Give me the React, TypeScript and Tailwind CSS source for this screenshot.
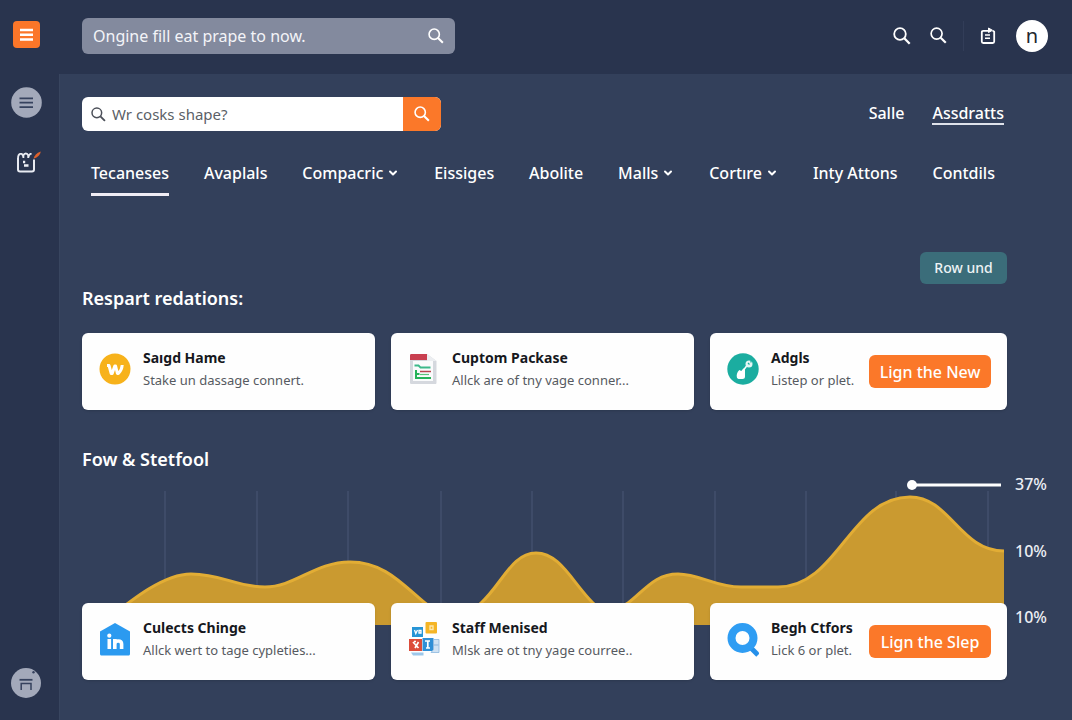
import type { ReactNode } from "react";
import { ChevronDown } from "lucide-react";

const navItems = [
  { label: "Tecaneses", active: true },
  { label: "Avaplals" },
  { label: "Compacric", menu: true },
  { label: "Eissiges" },
  { label: "Abolite" },
  { label: "Malls", menu: true },
  { label: "Cortıre", menu: true },
  { label: "Inty Attons" },
  { label: "Contdils" },
];

function SearchIcon({ className }: { className: string }) {
  return (
    <svg viewBox="0 0 18 18" className={className} fill="none" stroke="currentColor" aria-hidden="true">
      <circle cx="7" cy="7" r="5.800" strokeWidth="1.800" />
      <path d="m11.300 11.300 5.400 5.400" strokeWidth="2.300" />
    </svg>
  );
}

function ListLogo() {
  return (
    <svg viewBox="0 0 27 27" className="size-[27px]" aria-hidden="true">
      <rect width="27" height="27" rx="4" fill="#fb7629" />
      <path d="M7 9h13M7 13.700h13M7 18.500h13" stroke="#fff" strokeWidth="2.400" />
    </svg>
  );
}

function MenuBadge() {
  return (
    <svg viewBox="0 0 31 31" className="size-[31px]" aria-hidden="true">
      <circle cx="15.500" cy="15.500" r="15.300" fill="#a3a9ba" />
      <path d="M8.500 11.300h13.500M8.500 15.700h13.500M8.500 20.100h13.500" stroke="#36425e" strokeWidth="1.700" />
    </svg>
  );
}

function BagIcon() {
  return (
    <svg viewBox="0 0 26 24" className="h-6 w-[26px]" fill="none" aria-hidden="true">
      <path
        d="M3 8.500C3 6 3.500 4.300 5 3.800h1.500c1.200.4 1.700 1.800 1.900 3.700M8.400 8V5.500C8.800 4.200 9.600 3.500 10.800 3.500s2 .7 2.400 2V8M13.400 7.500c.2-1.900.8-3.200 2-3.700h1.200"
        stroke="#e8ebf2"
        strokeWidth="1.800"
        strokeLinejoin="round"
      />
      <path d="M3 8v11.500c0 1.300.7 2 2 2h12c1.300 0 2-.7 2-2V9.500" stroke="#e8ebf2" strokeWidth="2" />
      <path d="M8 12h2.200M9 15.500h4.500" stroke="#eef0f6" strokeWidth="2.400" />
      <path d="M18.500 8.800c.8-3 3-5.800 7.300-7.300-.4 3.200-2.800 6-7.300 7.300Z" fill="#e0622b" />
    </svg>
  );
}

function TableBadge() {
  return (
    <svg viewBox="0 0 30 30" className="size-[30px]" fill="none" aria-hidden="true">
      <circle cx="15" cy="15" r="15" fill="#a3a9ba" />
      <path d="M8.500 11.800h13" stroke="#36425e" strokeWidth="1.800" />
      <path d="M10.200 22v-6.500h9.800V22" stroke="#36425e" strokeWidth="1.500" />
      <circle cx="22.500" cy="4.300" r="1.200" fill="#36425e" />
    </svg>
  );
}

function NoteIcon() {
  return (
    <svg viewBox="0 0 16 18" className="h-[18px] w-4" fill="none" aria-hidden="true">
      <path
        d="M8 3.800H3.300c-1 0-1.500.6-1.500 1.500v9.200c0 .9.500 1.500 1.500 1.500h9.400c1 0 1.500-.6 1.500-1.500V4.800l-1.500-1.200"
        stroke="#fff"
        strokeWidth="1.800"
        strokeLinejoin="round"
      />
      <path d="M8.500 1 12.500 3.300 8.500 5.500Z" fill="#fff" stroke="#fff" strokeLinejoin="round" />
      <path d="M5 8h5M5 11.300h5" stroke="#fff" strokeWidth="1.500" />
    </svg>
  );
}

function CoinIcon() {
  return (
    <svg viewBox="0 0 32 32" className="size-8" fill="none" aria-hidden="true">
      <circle cx="16" cy="16" r="15.500" fill="#f7b21b" />
      <path
        d="M8 12.500h2l2.200 8h1l2.600-7.500h.8l1.800 7.500h1c2.300-2.200 3.600-5 3.800-8.500"
        stroke="#fff"
        strokeWidth="3"
        strokeLinejoin="round"
      />
    </svg>
  );
}

function DocumentIcon() {
  return (
    <svg viewBox="0 0 32 32" className="size-8" fill="none" aria-hidden="true">
      <path d="M2 2.500c0-.8.5-1.500 1.500-1.500H19l9.500 7v21.500c0 1-.5 1.500-1.500 1.500H3.500c-1 0-1.500-.5-1.500-1.500Z" fill="#d5d8de" />
      <path d="M5 8h20v20H5z" fill="#fafbfc" />
      <path d="M2 2.500C2 1.500 2.500 1 3.500 1H19v6H2Z" fill="#c93f50" />
      <path d="M19 1v7h9.500Z" fill="#eceef1" />
      <path d="M6.500 12.500h4l2 2h10" stroke="#3cb98a" strokeWidth="1.800" />
      <path d="M8 17v8h15M8.500 21h3" stroke="#27b35a" strokeWidth="2" />
      <path d="M12 18.500h11" stroke="#b8434f" strokeWidth="1.500" />
      <path d="M12 21.500h9" stroke="#5cc47c" strokeWidth="1.200" />
    </svg>
  );
}

function PlantIcon() {
  return (
    <svg viewBox="0 0 32 32" className="size-8" fill="none" aria-hidden="true">
      <circle cx="16" cy="16" r="15.700" fill="#1bada0" />
      <path d="M10 25c-.8-3 0-6 2.300-8l2 1 2-2.500 1.700.8v7.200c0 1.700-.9 2.500-2.500 2.500h-4Z" fill="#fff" />
      <path d="m16.500 17 4-5" stroke="#fff" strokeWidth="1.500" />
      <circle cx="22" cy="11" r="3.500" fill="#e6f6f4" />
      <path d="m21 10 1.500 1.500M24 7.500v2" stroke="#1bada0" strokeWidth="1.200" />
    </svg>
  );
}

function HouseInIcon() {
  return (
    <svg viewBox="0 0 32 34" className="h-[34px] w-8" fill="none" aria-hidden="true">
      <path d="M1 9.500 16 1l15 8.500V32c0 .9-.6 1.500-1.500 1.500h-27C1.600 33.500 1 32.900 1 32Z" fill="#2b9af0" />
      <circle cx="10.300" cy="13.700" r="2.100" fill="#fff" />
      <path d="M10.300 17v10M15.800 27V17M15.800 22c0-2 1.300-3 3.400-3s3.400 1 3.400 3v5" stroke="#fff" strokeWidth="3.600" />
    </svg>
  );
}

function BlocksIcon() {
  return (
    <svg viewBox="0 0 32 36" className="h-9 w-8" fill="none" aria-hidden="true">
      <rect x="4" y="6" width="11" height="10" fill="#2795d6" />
      <rect x="17.500" y="1" width="11.500" height="11.500" rx="1" fill="#f5b526" />
      <path d="M22 5h3v3.500h-3z" stroke="#fde6ac" strokeWidth="1.400" />
      <path d="m6.500 9 1.300 3.500L9.500 9M11 9.500h2v2.500h-2z" stroke="#fff" strokeWidth="1.300" />
      <rect x="1" y="18" width="13" height="12" fill="#dc4c3a" />
      <path d="m5 21 5.500 6M10.500 21 7 27M6 20.500h2" stroke="#fff" strokeWidth="1.700" />
      <rect x="14.500" y="17" width="11" height="13" fill="#2f8fd6" />
      <path d="M17 20h5M19.800 20v6.500M18 27h4" stroke="#fff" strokeWidth="1.700" />
      <path d="M25.500 18.500h5.500v13h-8l2.500-3Z" fill="#cfe2f3" stroke="#8bb7de" strokeWidth=".8" />
      <path d="M25.500 24h5" stroke="#8bb7de" />
      <path d="M3 31.500h12.500v3H5Z" fill="#9cc7ea" />
    </svg>
  );
}

function LensIcon() {
  return (
    <svg viewBox="0 0 32 36" className="h-9 w-8" fill="none" aria-hidden="true">
      <path d="m21.500 24.500 9.500 9.500" stroke="#2590ea" strokeWidth="5" />
      <circle cx="15.500" cy="17" r="11" stroke="#2f9df3" strokeWidth="8" />
    </svg>
  );
}

type CardProps = { icon: ReactNode; title: string; text: string; action?: string };

function Card({ icon, title, text, action }: CardProps) {
  return (
    <article className="flex items-center justify-between rounded-md bg-[#fefefe] py-[14px] pr-4 pl-[17px] shadow-sm">
      <div className="flex min-w-0 items-center gap-3 pb-[5px]">
        <span className="flex h-11 w-8 shrink-0 items-center justify-center">{icon}</span>
        <div className="min-w-0 whitespace-nowrap">
          <h3 className="text-sm leading-[22px] font-bold text-[#16181d]">{title}</h3>
          <p className="text-[13px] leading-[22px] text-[#565a61]">{text}</p>
        </div>
      </div>
      {action && (
        <button
          type="button"
          className="h-[33px] w-[122px] shrink-0 rounded-md bg-[#fb7829] text-base font-medium whitespace-nowrap text-white"
        >
          {action}
        </button>
      )}
    </article>
  );
}

const gridLines = [165, 257, 348, 441, 532, 623, 715, 806, 896, 988];

const curve =
  "M100 625C128 603 162 574 191 574C222 574 236 587 265 587C295 587 315 562 350 562C384 562 402 584 425 603C445 620 465 620 481 603C502 584 512 553 536 553C560 553 572 582 593 603C602 612 615 612 628 603C645 590 655 574 678 574C700 574 715 587 741 587L778 587C838 587 850 497 910 497C950 497 960 551 1004 551";

function AreaChart() {
  return (
    <svg
      viewBox="82 473 925 155"
      preserveAspectRatio="none"
      className="h-[155px] min-w-0 flex-1"
      fill="none"
      role="img"
      aria-label="Fow &amp; Stetfool"
    >
      {gridLines.map((x) => (
        <path key={x} d={`M${x} 491V612`} stroke="#434f6c" strokeWidth="1.500" />
      ))}
      <path d={`${curve}V625Z`} fill="#ca9a30" />
      <path d={curve} stroke="#e2ad35" strokeWidth="3" />
      <path d="M912 485h89" stroke="#fff" strokeWidth="3" />
      <circle cx="912" cy="485" r="5" fill="#fff" />
    </svg>
  );
}

export default function App() {
  return (
    <div className="flex min-h-screen flex-col bg-[#33405b] font-['Noto_Sans','Open_Sans',sans-serif] text-white">
      <div className="flex flex-1">
        <aside className="flex w-[59px] shrink-0 flex-col items-center bg-[#29344e] pt-[21px] pr-[7px] pb-[22px]">
          <a href="#home" aria-label="Home">
            <ListLogo />
          </a>
          <button type="button" aria-label="Menu" className="mt-[39px]">
            <MenuBadge />
          </button>
          <button type="button" aria-label="Bag" className="mt-8 ml-1">
            <BagIcon />
          </button>
          <button type="button" aria-label="Desk" className="mt-auto">
            <TableBadge />
          </button>
        </aside>

        <div className="flex min-w-0 flex-1 flex-col">
          <header className="flex h-[74px] items-center justify-between bg-[#29344e] pr-6 pb-[3px] pl-[23px]">
            <label className="flex h-9 w-[373px] items-center rounded-md bg-[#838a9e] px-[11px]">
              <input
                type="text"
                aria-label="Search everything"
                placeholder="Ongine fill eat prape to now."
                className="min-w-0 flex-1 bg-transparent text-base outline-none placeholder:text-[#f3f4f8]"
              />
              <SearchIcon className="size-4" />
            </label>
            <div className="flex items-center">
              <button type="button" aria-label="Search">
                <SearchIcon className="size-[18px]" />
              </button>
              <button type="button" aria-label="Find" className="ml-[19px]">
                <SearchIcon className="size-[17px]" />
              </button>
              <span className="mx-4 h-[30px] w-px bg-[#323d58]" />
              <button type="button" aria-label="Notes">
                <NoteIcon />
              </button>
              <button
                type="button"
                aria-label="Account"
                className="ml-5 size-8 rounded-full bg-white text-[20px] leading-8 text-[#23262e]"
              >
                n
              </button>
            </div>
          </header>

          <main className="flex-1 border-l border-[#38455f] pt-[23px] pb-10 pl-[22px]">
            <div className="pr-[65px]">
              <div className="flex items-center justify-between">
                <form className="flex h-[34px] w-[359px] overflow-hidden rounded-md bg-white">
                  <label className="flex min-w-0 flex-1 items-center gap-1.5 pl-[9px] text-[#4c5059]">
                    <SearchIcon className="size-[15px]" />
                    <input
                      type="text"
                      aria-label="Search shapes"
                      placeholder="Wr cosks shape?"
                      className="min-w-0 flex-1 bg-transparent text-[15px] outline-none placeholder:text-[#5b5f67]"
                    />
                  </label>
                  <button
                    type="button"
                    aria-label="Go"
                    className="flex w-[38px] items-center justify-center bg-[#fb7829]"
                  >
                    <SearchIcon className="size-4" />
                  </button>
                </form>
                <div className="flex gap-7 pr-[3px] text-base leading-5 font-medium">
                  <a href="#salle" className="border-b-2 border-transparent">
                    Salle
                  </a>
                  <a href="#assdratts" className="border-b-2 border-[#dfe2ea]">
                    Assdratts
                  </a>
                </div>
              </div>

              <nav className="mt-[30px] flex justify-between pr-3 pl-[9px] text-base leading-6 font-medium whitespace-nowrap">
                {navItems.map((item) => (
                  <a
                    key={item.label}
                    href="#nav"
                    className={
                      item.active
                        ? "flex items-center border-b-[3px] border-[#f0edf5] pb-2"
                        : "flex items-center gap-1 border-b-[3px] border-transparent pb-2"
                    }
                  >
                    {item.label}
                    {item.menu && <ChevronDown className="size-3" strokeWidth={4} />}
                  </a>
                ))}
              </nav>

              <div className="mt-14 flex justify-end">
                <button
                  type="button"
                  className="h-8 w-[87px] rounded-md bg-[#3b6d7a] text-sm font-medium text-[#edf3f5]"
                >
                  Row und
                </button>
              </div>

              <h2 className="text-lg leading-7 font-semibold">Respart redations:</h2>
              <section className="mt-[21px] grid grid-cols-[293fr_303fr_297fr] gap-4">
                <Card icon={<CoinIcon />} title="Saıgd Hame" text="Stake un dassage connert." />
                <Card icon={<DocumentIcon />} title="Cuptom Packase" text="Allck are of tny vage conner..." />
                <Card icon={<PlantIcon />} title="Adgls" text="Listep or plet." action="Lign the New" />
              </section>

              <h2 className="mt-[35px] text-lg leading-7 font-semibold">Fow &amp; Stetfool</h2>
            </div>

            <div className="flex gap-2 pr-6">
              <AreaChart />
              <div className="flex w-[33px] flex-col justify-between text-base leading-[22px] font-medium text-[#eceef4]">
                <span>37%</span>
                <span>10%</span>
                <span>10%</span>
              </div>
            </div>

            <section className="relative -mt-[25px] mr-[65px] grid grid-cols-[293fr_303fr_297fr] gap-4">
              <Card icon={<HouseInIcon />} title="Culects Chinge" text="Allck wert to tage cypleties..." />
              <Card icon={<BlocksIcon />} title="Staff Menised" text="Mlsk are ot tny yage courree.." />
              <Card icon={<LensIcon />} title="Begh Ctfors" text="Lick 6 or plet." action="Lign the Slep" />
            </section>
          </main>
        </div>
      </div>
    </div>
  );
}
